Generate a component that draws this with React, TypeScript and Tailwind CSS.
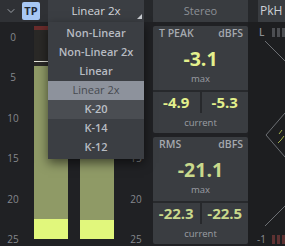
import { ChevronDown } from "lucide-react";

const scale = ["0", "5", "10", "15", "20", "25"];
const modes = ["Non-Linear", "Non-Linear 2x", "Linear", "Linear 2x", "K-20", "K-14", "K-12"];

function Scale() {
  return (
    <div className="mt-[9px] flex h-[214px] flex-col justify-between">
      {scale.map((s) => (
        <span key={s} className="h-[12px] text-center text-[10px] leading-[12px] text-[#85888d]">
          {s}
        </span>
      ))}
    </div>
  );
}

function Bar({ hot }: { hot: string }) {
  return (
    <div className="flex h-[213px] w-[34px] flex-col bg-[#2a2927]">
      <div className="h-[4px] bg-[#6a2c2c]" />
      <div className="h-[31px]" />
      <div className="h-px bg-[#e4e4da]" />
      <div className="h-[4px]" />
      <div className="flex-1 bg-[#8f9a66]" />
      <div className={`${hot} bg-[#e1f77c]`} />
    </div>
  );
}

type PanelProps = {
  title: string;
  max: string;
  left: string;
  right: string;
  color: string;
};

function Panel({ title, max, left, right, color }: PanelProps) {
  return (
    <div className="flex h-[107px] w-[95px] shrink-0 flex-col rounded-[2px] bg-[#3a3d41]">
      <div className="flex h-[16px] items-center justify-between pl-[6px] pr-[5px] text-[10.5px] font-semibold text-[#a5a9af]">
        <span>{title}</span>
        <span>dBFS</span>
      </div>
      <div className={`mt-[2px] flex h-[30px] items-center justify-center text-[19.5px] font-bold ${color}`}>
        {max}
      </div>
      <div className="flex h-[10px] items-center justify-center text-[9.5px] font-medium text-[#9a9da3]">max</div>
      <div className="mt-[6px] flex h-[23px] border-t-2 border-[#27292c]">
        <div className={`flex flex-1 items-center justify-center text-[15px] font-bold ${color}`}>{left}</div>
        <div className="w-[2px] bg-[#27292c]" />
        <div className={`flex flex-1 items-center justify-center text-[15px] font-bold ${color}`}>{right}</div>
      </div>
      <div className="flex h-[20px] items-center justify-center text-[9.5px] font-medium text-[#9a9da3]">current</div>
    </div>
  );
}

function Segments({ color }: { color: string }) {
  return (
    <div className="flex gap-[2px]">
      <div className={`h-[9px] w-[3px] ${color}`} />
      <div className={`h-[9px] w-[3px] ${color}`} />
      <div className={`h-[9px] w-[3px] ${color}`} />
    </div>
  );
}

export default function App() {
  return (
    <div className="relative flex h-[246px] w-[285px] flex-col overflow-hidden bg-[#202124] font-['Open_Sans',sans-serif]">
      {/* top bar */}
      <div className="flex h-[22px] shrink-0 bg-[#26282b]">
        <div className="flex w-[48px] items-center bg-[#2f3135] pl-[5px]">
          <ChevronDown size={12} strokeWidth={2} className="text-[#9ca1a8]" />
          <div className="ml-[5px] flex h-[18px] w-[18px] items-center justify-center rounded-[2px] bg-[#a7c8f5] text-[11px] font-bold text-[#1f2935]">
            TP
          </div>
        </div>
        <div className="relative flex w-[96px] items-center justify-center bg-[#3b3e43] text-[11.5px] text-[#d3d6db]">
          Linear 2x
          <svg className="absolute bottom-[3px] right-[2px]" width="5" height="5" viewBox="0 0 5 5">
            <path d="M5 0 L5 5 L0 5 Z" fill="#c9ccd1" />
          </svg>
        </div>
        <div className="w-[9px]" />
        <div className="flex w-[95px] items-center justify-center bg-[#393c40] text-[11px] text-[#8c9096]">Stereo</div>
        <div className="w-[10px]" />
        <div className="flex flex-1 items-center bg-[#393c40] pl-[2px] text-[12px] text-[#cdd1d6]">PkH</div>
      </div>

      {/* body */}
      <div className="flex flex-1">
        <div className="w-[26px]">
          <Scale />
        </div>
        <div className="ml-[8px] mt-[4px] flex gap-[12px]">
          <Bar hot="h-[20px]" />
          <Bar hot="h-[19px]" />
        </div>
        <div className="ml-[14px] w-[16px]">
          <Scale />
        </div>
        <div className="ml-[9px] mt-[4px] flex flex-col gap-[4px]">
          <Panel title="T PEAK" max="-3.1" left="-4.9" right="-5.3" color="text-[#e3f08c]" />
          <Panel title="RMS" max="-21.1" left="-22.3" right="-22.5" color="text-[#c9d98c]" />
        </div>
        <div className="relative flex flex-1 flex-col justify-between bg-[#1d1e20] pb-[1px] pt-[5px]">
          <svg className="absolute inset-0" width="37" height="224" viewBox="0 0 37 224">
            <line x1="17" y1="19" x2="40" y2="42" stroke="#6d7074" strokeWidth="1" />
            <line x1="17" y1="204" x2="40" y2="181" stroke="#6d7074" strokeWidth="1" />
            <path d="M37 91 L18 113 L37 135" fill="none" stroke="#6d7074" strokeWidth="1" />
            <path d="M31 112 L34 108 M33 118 L36 114 M30 121 L33 118" stroke="#a3b04a" strokeWidth="1" />
          </svg>
          <div className="relative flex items-center justify-between pl-[11px]">
            <span className="text-[10px] font-semibold leading-[10px] text-[#8a8d92]">L</span>
            <Segments color="bg-[#4c4e52]" />
          </div>
          <div className="relative flex items-center justify-between pl-[9px]">
            <span className="text-[10px] leading-[12px] text-[#8a8d92]">-1</span>
            <Segments color="bg-[#5e3232]" />
          </div>
        </div>
      </div>

      {/* open dropdown */}
      <div className="absolute left-[48px] top-[22px] w-[96px] bg-[#3b3e43] py-[2px] shadow-[0_4px_10px_rgba(0,0,0,0.55)]">
        {modes.map((m) => (
          <div
            key={m}
            className={`flex h-[19px] items-center justify-center text-[11px] ${
              m === "Linear 2x"
                ? "bg-[#8d929c] font-medium text-[#474a50]"
                : m === "K-20"
                  ? "bg-[#4a4d52] font-semibold text-[#bcc0c7]"
                  : "font-semibold text-[#b7bbc2]"
            }`}
          >
            {m}
          </div>
        ))}
      </div>
    </div>
  );
}
